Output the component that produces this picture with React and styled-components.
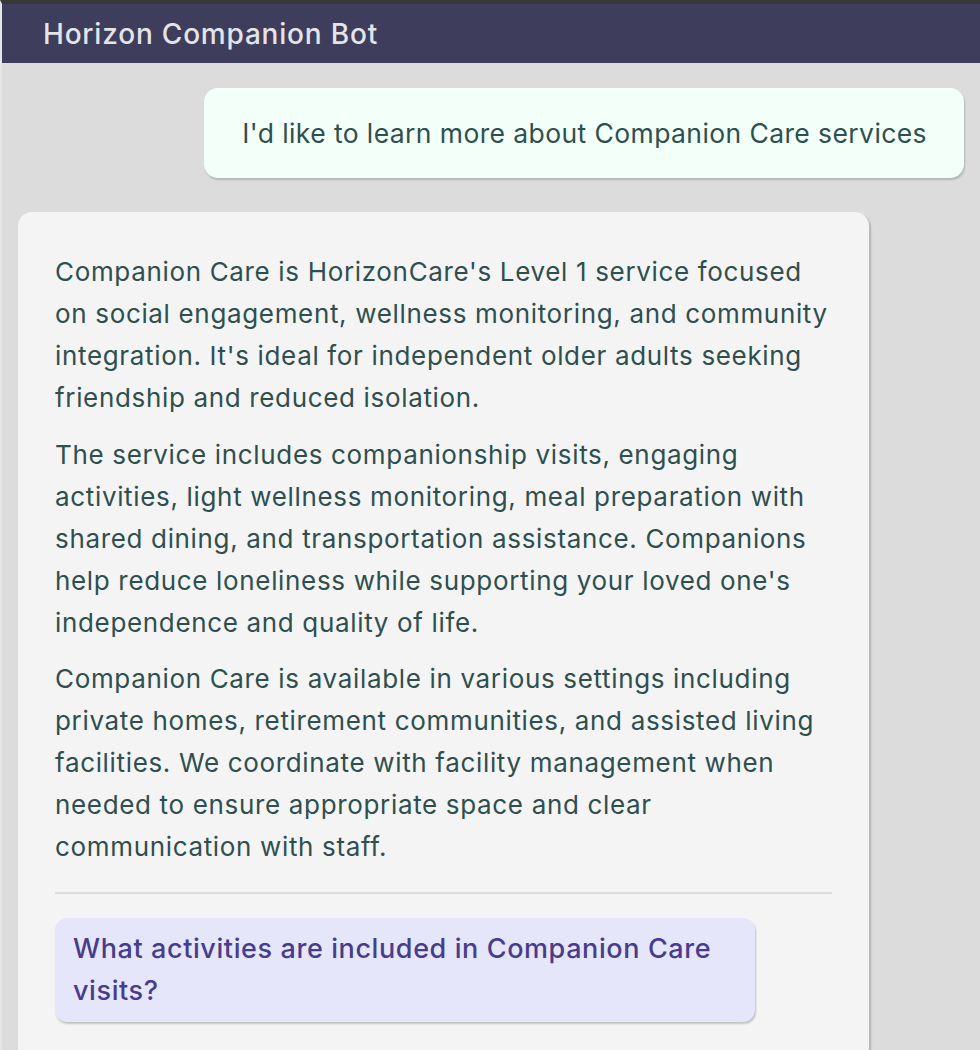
import React from 'react';
import styled, { createGlobalStyle } from 'styled-components';

const GlobalStyle = createGlobalStyle`
  html, body {
    margin: 0;
    padding: 0;
    background: #dcdcdc;
  }
  body {
    font-family: Inter, "Noto Sans", "Liberation Sans", sans-serif;
  }
`;

const paragraphs = [
  [
    "Companion Care is HorizonCare's Level 1 service focused",
    'on social engagement, wellness monitoring, and community',
    "integration. It's ideal for independent older adults seeking",
    'friendship and reduced isolation.',
  ],
  [
    'The service includes companionship visits, engaging',
    'activities, light wellness monitoring, meal preparation with',
    'shared dining, and transportation assistance. Companions',
    "help reduce loneliness while supporting your loved one's",
    'independence and quality of life.',
  ],
  [
    'Companion Care is available in various settings including',
    'private homes, retirement communities, and assisted living',
    'facilities. We coordinate with facility management when',
    'needed to ensure appropriate space and clear',
    'communication with staff.',
  ],
];

const suggestions = ['What activities are included in Companion Care visits?'];

const App = () => {
  return (
    <>
      <GlobalStyle />
      <Page>
        <Header>
          <Title>Horizon Companion Bot</Title>
        </Header>
        <Thread>
          <Row $side="right">
            <UserBubble>I'd like to learn more about Companion Care services</UserBubble>
          </Row>
          <Row $side="left">
            <BotBubble>
              {paragraphs.map((lines, i) => (
                <Paragraph key={i}>{lines.join('\n')}</Paragraph>
              ))}
              <Divider />
              <Suggestions>
                {suggestions.map((s) => (
                  <SuggestionButton key={s}>{s}</SuggestionButton>
                ))}
              </Suggestions>
            </BotBubble>
          </Row>
        </Thread>
      </Page>
    </>
  );
};

const Page = styled.div`
  height: 1050px;
  overflow: hidden;
  background: #dcdcdc;
  border-top: 4px solid #383838;
  border-left: 2px solid #e6e6e6;
  box-sizing: border-box;
  display: flex;
  flex-direction: column;
`;

const Header = styled.header`
  flex: 0 0 59px;
  background: #3e3d5b;
  display: flex;
  align-items: center;
  padding: 0 41px;
  margin-left: -2px;
  border-left: 2px solid #5d5c74;
`;

const Title = styled.h1`
  margin: 0;
  font-size: 28px;
  font-weight: 500;
  color: #e4e4e8;
  letter-spacing: 0.8px;
`;

const Thread = styled.main`
  display: flex;
  flex-direction: column;
  gap: 34px;
  padding: 25px 16px 0 16px;
`;

const Row = styled.div`
  display: flex;
  justify-content: ${({ $side }) => ($side === 'right' ? 'flex-end' : 'flex-start')};
`;

const UserBubble = styled.div`
  max-width: 90%;
  background: #f3fff9;
  color: #2f4f4f;
  font-size: 26.5px;
  letter-spacing: 0.4px;
  line-height: 42px;
  padding: 24px 37px 24px 38px;
  border-radius: 14px;
  box-shadow: 1px 2px 2px rgba(0, 0, 0, 0.18);
  white-space: nowrap;
`;

const BotBubble = styled.div`
  max-width: 90%;
  flex: 0 0 90%;
  box-sizing: border-box;
  background: #f4f4f4;
  color: #2f4f4f;
  font-size: 26px;
  letter-spacing: 0.66px;
  line-height: 42px;
  padding: 39px 37px 40px 37px;
  border-radius: 14px;
  box-shadow: 2px 2px 2px rgba(0, 0, 0, 0.18);
`;

const Paragraph = styled.p`
  margin: 0 0 14.5px;
  white-space: pre-line;

  &:last-of-type {
    margin-bottom: 0;
  }
`;

const Divider = styled.hr`
  border: none;
  height: 2px;
  background: #dcdcdc;
  margin: 24px 0;
`;

const Suggestions = styled.div`
  display: flex;
  flex-direction: column;
  gap: 12px;
`;

const SuggestionButton = styled.button`
  align-self: flex-start;
  max-width: 90%;
  text-align: left;
  font-family: inherit;
  font-size: 27px;
  font-weight: 500;
  letter-spacing: 0.6px;
  line-height: 42px;
  color: #483d8b;
  background: #e6e6fa;
  border: none;
  border-radius: 12px;
  padding: 10px 18px;
  box-shadow: 1px 2px 2px rgba(0, 0, 0, 0.2);
  cursor: pointer;
`;

export default App;
